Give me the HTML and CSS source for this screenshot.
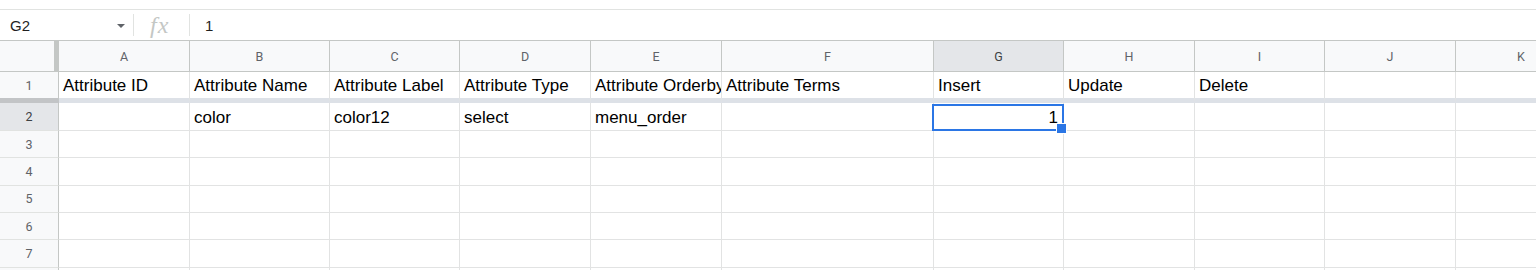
FILE: index.html
```html
<!DOCTYPE html>
<html lang="en">
<head>
  <meta charset="UTF-8">
  <title>Sheet - Attributes</title>
  <link rel="stylesheet" href="styles.css">
</head>
<body>
  <div class="sheet">
    <div class="formula-bar">
      <div class="name-box">
        <span>G2</span>
        <span class="caret"></span>
      </div>
      <div class="divider"></div>
      <div class="fx">fx</div>
      <div class="divider"></div>
      <div class="formula-value">1</div>
    </div>

    <div class="grid-row col-head">
      <div class="corner"></div>
      <div class="ch">A</div>
      <div class="ch">B</div>
      <div class="ch">C</div>
      <div class="ch">D</div>
      <div class="ch">E</div>
      <div class="ch">F</div>
      <div class="ch active">G</div>
      <div class="ch">H</div>
      <div class="ch">I</div>
      <div class="ch">J</div>
      <div class="ch">K</div>
    </div>

    <div class="grid-row frozen">
      <div class="rh">1</div>
      <div class="cell">Attribute ID</div>
      <div class="cell">Attribute Name</div>
      <div class="cell">Attribute Label</div>
      <div class="cell">Attribute Type</div>
      <div class="cell">Attribute Orderby</div>
      <div class="cell">Attribute Terms</div>
      <div class="cell">Insert</div>
      <div class="cell">Update</div>
      <div class="cell">Delete</div>
      <div class="cell"></div>
      <div class="cell"></div>
    </div>

    <div class="grid-row row-2">
      <div class="rh active">2</div>
      <div class="cell"></div>
      <div class="cell">color</div>
      <div class="cell">color12</div>
      <div class="cell">select</div>
      <div class="cell">menu_order</div>
      <div class="cell"></div>
      <div class="cell num selected">1</div>
      <div class="cell"></div>
      <div class="cell"></div>
      <div class="cell"></div>
      <div class="cell"></div>
    </div>

    <div class="grid-row">
      <div class="rh">3</div>
      <div class="cell"></div><div class="cell"></div><div class="cell"></div><div class="cell"></div>
      <div class="cell"></div><div class="cell"></div><div class="cell"></div><div class="cell"></div>
      <div class="cell"></div><div class="cell"></div><div class="cell"></div>
    </div>
    <div class="grid-row">
      <div class="rh">4</div>
      <div class="cell"></div><div class="cell"></div><div class="cell"></div><div class="cell"></div>
      <div class="cell"></div><div class="cell"></div><div class="cell"></div><div class="cell"></div>
      <div class="cell"></div><div class="cell"></div><div class="cell"></div>
    </div>
    <div class="grid-row">
      <div class="rh">5</div>
      <div class="cell"></div><div class="cell"></div><div class="cell"></div><div class="cell"></div>
      <div class="cell"></div><div class="cell"></div><div class="cell"></div><div class="cell"></div>
      <div class="cell"></div><div class="cell"></div><div class="cell"></div>
    </div>
    <div class="grid-row">
      <div class="rh">6</div>
      <div class="cell"></div><div class="cell"></div><div class="cell"></div><div class="cell"></div>
      <div class="cell"></div><div class="cell"></div><div class="cell"></div><div class="cell"></div>
      <div class="cell"></div><div class="cell"></div><div class="cell"></div>
    </div>
    <div class="grid-row">
      <div class="rh">7</div>
      <div class="cell"></div><div class="cell"></div><div class="cell"></div><div class="cell"></div>
      <div class="cell"></div><div class="cell"></div><div class="cell"></div><div class="cell"></div>
      <div class="cell"></div><div class="cell"></div><div class="cell"></div>
    </div>
    <div class="grid-row">
      <div class="rh"></div>
      <div class="cell"></div><div class="cell"></div><div class="cell"></div><div class="cell"></div>
      <div class="cell"></div><div class="cell"></div><div class="cell"></div><div class="cell"></div>
      <div class="cell"></div><div class="cell"></div><div class="cell"></div>
    </div>
  </div>
</body>
</html>
```

FILE: styles.css
```css
* {
  box-sizing: border-box;
}

body {
  margin: 0;
  background-color: #fff;
  font-family: "Liberation Sans", Arial, sans-serif;
  overflow: hidden;
}

.sheet {
  width: 1587px;
  padding-top: 9px;
}

/* formula bar */
.formula-bar {
  display: flex;
  align-items: center;
  height: 32px;
  border-top: 1px solid #e1e3e1;
  border-bottom: 1px solid #c4c7c5;
}

.name-box {
  width: 133px;
  height: 100%;
  display: flex;
  align-items: center;
  justify-content: space-between;
  padding: 0 8px 0 10px;
  font-size: 15px;
  color: #1f1f1f;
}

.caret {
  width: 0;
  height: 0;
  border-left: 4px solid transparent;
  border-right: 4px solid transparent;
  border-top: 4px solid #5f6368;
  margin-top: 1px;
}

.divider {
  width: 1px;
  height: 22px;
  background-color: #e1e3e1;
}

.fx {
  width: 22px;
  margin: 0 17px 0 16px;
  font-family: "Liberation Serif", "Times New Roman", serif;
  font-style: italic;
  font-size: 24px;
  letter-spacing: 1px;
  color: #c4c7c5;
  line-height: 1;
}

.formula-value {
  padding-left: 15px;
  font-size: 15px;
  color: #1f1f1f;
}

/* grid */
.grid-row {
  display: grid;
  grid-template-columns: 59px 131px 140px 130px 131px 131px 212px 130px 131px 130px 131px 131px;
  height: 27.33px;
}

.col-head {
  height: 31px;
}

.corner {
  background-color: #f8f9fa;
  border-right: 5px solid #c4c7c5;
  border-bottom: 1px solid #c4c7c5;
}

.ch {
  display: flex;
  align-items: center;
  justify-content: center;
  background-color: #f8f9fa;
  border-right: 1px solid #c4c7c5;
  border-bottom: 1px solid #c4c7c5;
  font-family: Roboto, "Liberation Sans", sans-serif;
  font-size: 12.5px;
  color: #5f6368;
}

.ch.active {
  background-color: #e4e6e9;
  color: #3c4043;
}

.rh {
  display: flex;
  align-items: center;
  justify-content: center;
  background-color: #f8f9fa;
  border-right: 1px solid #c4c7c5;
  border-bottom: 1px solid #e1e3e1;
  font-family: Roboto, "Liberation Sans", sans-serif;
  font-size: 12.5px;
  color: #5f6368;
}

.rh.active {
  background-color: #e4e6e9;
  color: #3c4043;
}

.cell {
  display: flex;
  align-items: flex-end;
  padding: 0 4px 2px 4px;
  border-right: 1px solid #e2e3e3;
  border-bottom: 1px solid #e2e3e3;
  font-size: 17px;
  color: #000;
  white-space: nowrap;
  overflow: hidden;
}

.cell.num {
  justify-content: flex-end;
  padding-right: 5px;
}

/* frozen row 1 */
.frozen {
  height: 31px;
}

.frozen .cell {
  border-bottom: 5px solid #dde1e7;
}

.frozen .rh {
  border-bottom: 5px solid #c2c4c6;
}

.row-2 {
  height: 28px;
}

/* active cell G2 */
.selected {
  position: relative;
  overflow: visible;
}

.selected::after {
  content: "";
  position: absolute;
  left: -2px;
  top: 1px;
  right: -1px;
  bottom: -1px;
  border: 2px solid #2b76e5;
  z-index: 1;
}

.selected::before {
  content: "";
  position: absolute;
  right: -4px;
  bottom: -4px;
  width: 9px;
  height: 9px;
  background-color: #2b76e5;
  border: 1px solid #fff;
  z-index: 2;
}
```
